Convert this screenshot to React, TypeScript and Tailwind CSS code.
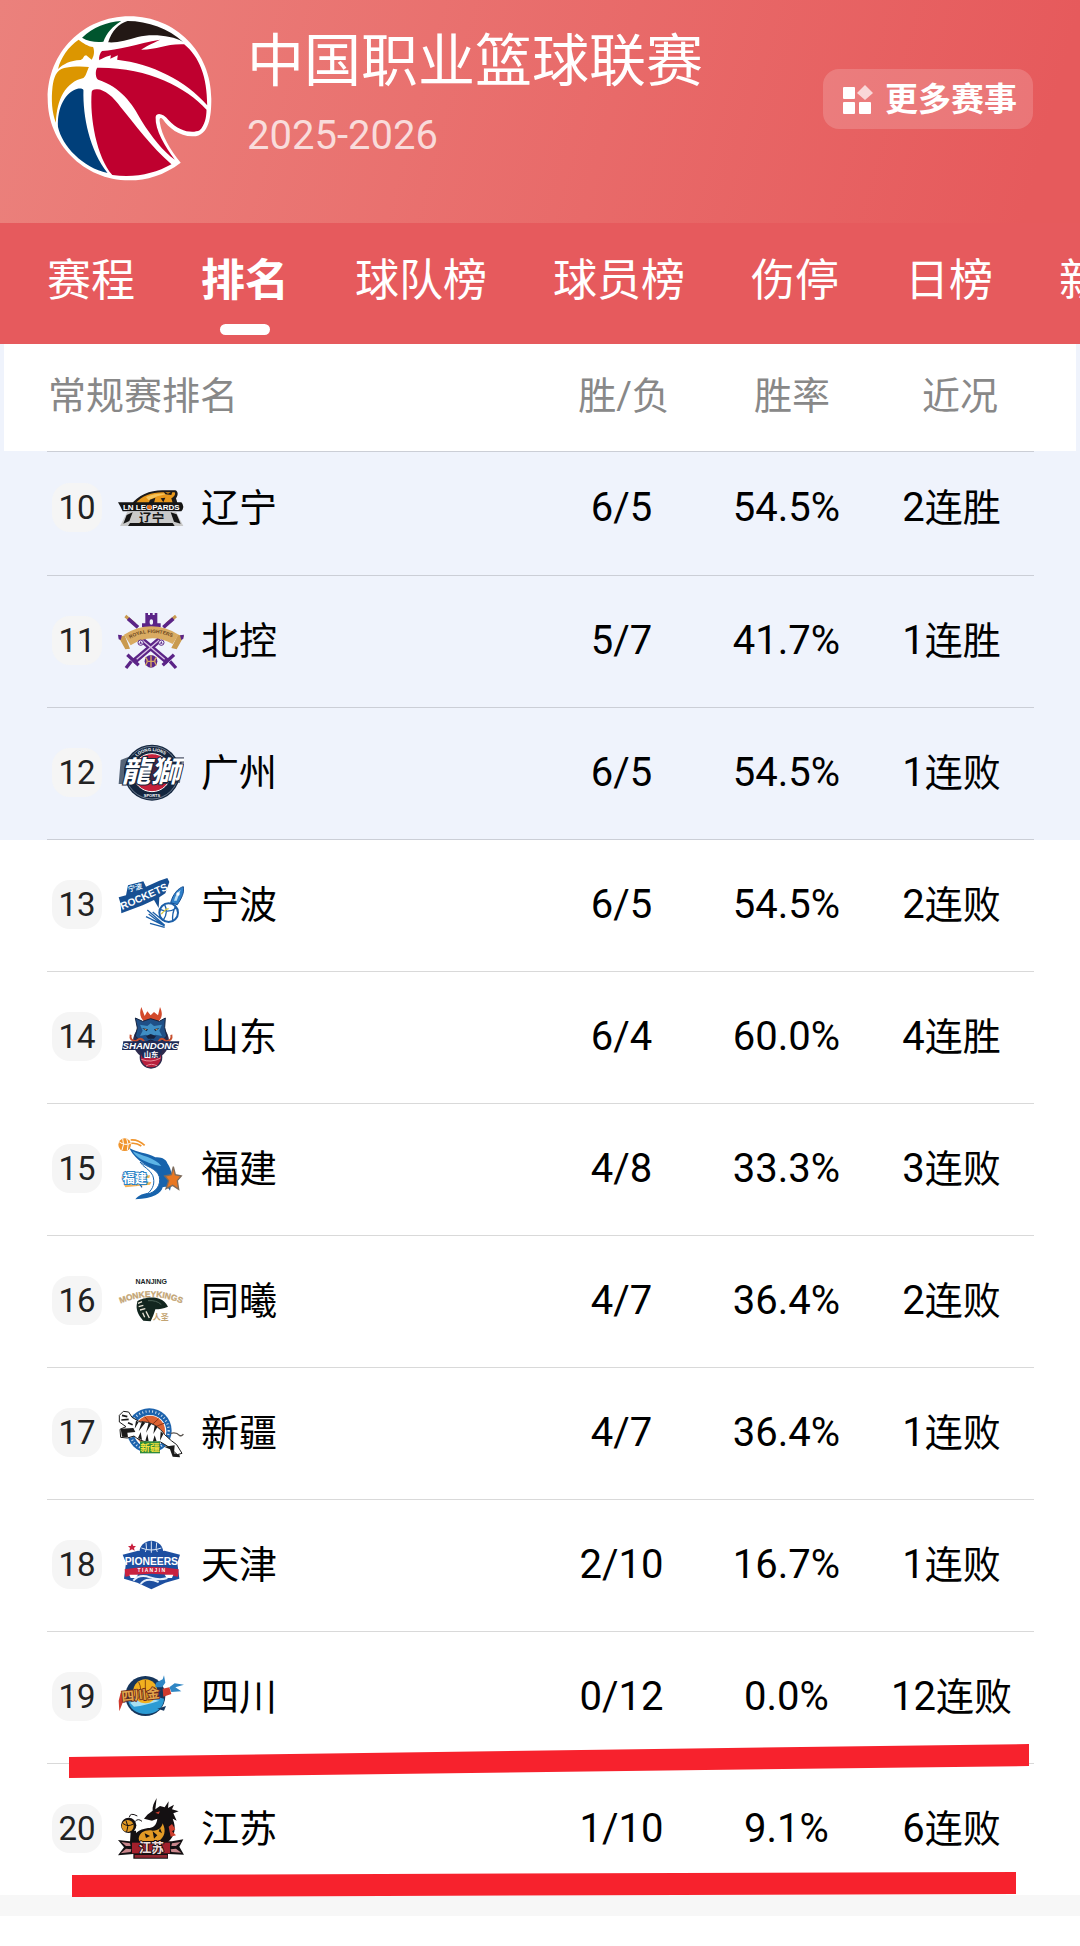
import type { ReactNode } from 'react'

type Team = {
  rank: number
  name: string
  record: string
  rate: string
  streak: number
  result: '连胜' | '连败'
  logo: ReactNode
}

const TABS = ['赛程', '排名', '球队榜', '球员榜', '伤停', '日榜', '新闻']

function LeagueLogo() {
  return (
    <svg viewBox="0 0 480 495" preserveAspectRatio="none" className="w-[165px] h-[165px] shrink-0" aria-hidden="true">
      <path fill="#fff" d="M389 440C340 478 290 493 240 493C105 493 2 380 2 248C2 110 105 1 240 1C375 1 478 110 478 248C478 300 472 360 425 361C385 362 354 336 337 310C330 302 326 306 328 318C334 360 358 400 389 440Z" />
      <path fill="#00552e" d="M102 65C134 33 174 18 216 15C189 33 174 50 164 77C144 80 119 76 102 65Z" />
      <path fill="#231815" d="M178 79C189 43 209 23 234 15C294 15 354 38 396 78C364 58 304 53 264 63C234 73 204 81 178 79Z" />
      <path fill="#dc9600" d="M92 71C104 81 119 91 134 93C139 105 137 121 130 131L114 118C106 118 108 128 98 132C66 134 48 144 32 159C40 125 62 92 92 71Z" />
      <path fill="#dc9600" d="M122 153C116 165 114 180 106 186C54 198 28 250 26 320C14 290 12 250 16 213C20 185 26 162 50 156C80 150 104 151 122 153Z" />
      <path fill="#003f7a" d="M106 223C104 303 124 403 176 471C104 455 44 390 32 333C29 273 54 228 89 218C100 217 106 219 106 223Z" />
      <path fill="#bf002f" d="M130 228C124 303 144 423 190 477C254 487 314 473 362 445C304 393 254 323 214 273C194 243 164 218 144 220Q130 221 130 228Z" />
      <path fill="#bf002f" d="M146 155C139 165 142 188 149 191C214 213 249 263 274 313C304 363 339 408 372 431C344 393 314 343 316 303C319 288 339 293 354 313C384 348 424 353 444 343C459 328 464 303 464 281C404 213 294 153 146 155Z" />
      <path fill="#bf002f" d="M160 105C204 103 264 83 329 71C304 83 284 93 274 101C324 101 344 83 399 85C444 123 466 183 466 268C404 193 304 143 204 131L206 118L184 128L186 118C174 121 159 128 152 133C150 123 154 111 160 105Z" />
    </svg>
  )
}

function TeamLogo({ children }: { children: ReactNode }) {
  return (
    <svg viewBox="0 0 198 198" className="w-[66px] h-[66px] shrink-0 font-['Liberation_Sans','Noto_Sans_CJK_SC',sans-serif] font-bold" aria-hidden="true">
      {children}
    </svg>
  )
}

const liaoning = (
  <>
    <path fill="#1c1a1a" d="M40 88C60 60 100 44 140 46L172 46C182 50 180 62 174 70L180 90L30 92Z" />
    <path fill="#e8981c" d="M52 86C72 60 108 50 140 52L170 52C174 58 168 66 160 70L164 84H60Z" />
    <path fill="#f6c45b" d="M84 66C104 56 130 54 150 56L118 64L92 76Z" />
    <path fill="#1c1a1a" d="M136 48L150 56L164 48L160 60L142 58ZM96 74L112 68L108 84H92ZM128 70L142 68L136 82Z" />
    <path fill="#151515" d="M0 82L190 82Q202 95 190 109L14 109L8 96Z" />
    <text x="100" y="104" fontSize="24" fill="#fff" textAnchor="middle">LN LEOPARDS</text>
    <circle cx="94" cy="96" r="7" fill="#e06a1c" />
    <path fill="#c9c9c9" d="M28 110L174 110L196 153L6 153Z" />
    <path fill="#151515" d="M26 120L44 112L34 138L16 146ZM158 112L176 118L188 146L168 140ZM36 144H164L170 153H30Z" />
    <text x="101" y="144" fontSize="38" fill="#151515" textAnchor="middle">辽宁</text>
  </>
)

const beikong = (
  <>
    <g fill="none">
      <path stroke="#c99a4f" strokeWidth="9" d="M22 24L50 48M174 24L146 48" />
      <path stroke="#5b2487" strokeWidth="11" d="M30 32L60 58M166 32L136 58" />
      <path stroke="#5b2487" strokeWidth="17" d="M70 94L150 162M126 94L46 162" />
      <path stroke="#d9c4e6" strokeWidth="4" d="M72 96L140 154M124 96L56 154" />
      <path stroke="#5b2487" strokeWidth="10" d="M28 140L62 172M168 140L134 172M40 160L24 180M156 160L174 180" />
    </g>
    <path fill="#5b2487" d="M82 15H90V21H96V15H104V21H110V15H118V46H128V58H72V46H82Z" />
    <rect x="95" y="34" width="10" height="16" rx="5" fill="#eff3fc" />
    <path fill="#c99a4f" d="M2 88L20 82L36 122L22 124ZM198 84L180 80L160 120L176 124Z" />
    <path fill="#d9ab62" d="M18 80Q100 30 182 80L164 108Q100 72 38 112Z" />
    <path fill="#5b2487" d="M0 80L12 82L8 96L2 94ZM186 82L198 80L196 92L190 96Z" />
    <path id="ribbon" d="M36 92Q100 58 172 92" fill="none" />
    <text fontSize="15" fill="#6b4520"><textPath href="#ribbon">ROYAL FIGHTERS</textPath></text>
    <g fill="#eff3fc" stroke="#5b2487" strokeWidth="3">
      <circle cx="68" cy="104" r="8" />
      <circle cx="130" cy="104" r="8" />
    </g>
    <path fill="#5b2487" d="M64 107L68 99L72 107ZM126 107L130 99L134 107Z" />
    <circle cx="99" cy="160" r="19" fill="#5b2487" />
    <path fill="none" stroke="#d9ab62" strokeWidth="4" d="M82 148Q94 160 82 172M116 148Q104 160 116 172M99 142V178M90 160H108" />
  </>
)

const guangzhou = (
  <>
    <circle cx="102" cy="98" r="84" fill="#14263f" />
    <circle cx="102" cy="98" r="79" fill="none" stroke="#9aa7b8" strokeWidth="2" />
    <circle cx="102" cy="98" r="57" fill="#c4213a" stroke="#fff" strokeWidth="3" />
    <path id="lionTop" d="M56 50Q102 14 156 54" fill="none" />
    <text fontSize="13" fill="#fff"><textPath href="#lionTop">LOONG LIONS</textPath></text>
    <text x="102" y="170" fontSize="12" fill="#fff" textAnchor="middle">SPORTS</text>
    <path fill="#14263f" d="M8 60L44 46L60 58L192 56L186 128L150 132L2 132Z" opacity=".7" />
    <text x="98" y="126" fontSize="88" fill="#fff" stroke="#14263f" strokeWidth="6" paintOrder="stroke" textAnchor="middle" fontStyle="italic">龍獅</text>
  </>
)

const ningbo = (
  <>
    <path stroke="#1c5fa8" strokeWidth="4" d="M88 114L140 160M92 126L134 158M100 142L140 162M84 134L118 150M96 154L140 166M104 120L136 146" />
    <circle cx="152" cy="122" r="28" fill="#fff" stroke="#1c5fa8" strokeWidth="6" />
    <path fill="none" stroke="#1c5fa8" strokeWidth="4" d="M126 112Q152 124 176 108M136 144Q152 122 140 98M164 146Q162 124 172 104" />
    <path fill="none" stroke="#d8c83c" strokeWidth="4" d="M130 126Q142 112 152 110" />
    <path fill="#2f7fc8" stroke="#174f92" strokeWidth="3" d="M196 44C180 48 164 68 158 92L178 98C190 80 200 62 196 44Z" />
    <path fill="#bfe0f5" d="M188 54C178 60 172 72 168 86L176 86Z" />
    <circle cx="180" cy="66" r="5" fill="#fff" />
    <path fill="#174f92" d="M2 76L24 70L30 40L76 28L84 44L124 26L148 18L154 30L142 64L124 76L122 108L108 84L74 100L10 124L8 96Z" />
    <text transform="translate(32 60) rotate(-14)" fontSize="22" fill="#dff0fb">宁波</text>
    <text transform="translate(13 114) rotate(-24)" fontSize="31" fill="#fff">ROCKETS</text>
  </>
)

const shandong = (
  <>
    <circle cx="99" cy="112" r="54" fill="#2d2a4d" />
    <path fill="#d34a2c" d="M70 9C62 30 68 46 84 56L116 56C132 46 136 30 126 9L120 34L108 24L98 34L88 22L80 36Z" />
    <path fill="#1f4f86" stroke="#16233f" strokeWidth="3" d="M52 42L74 52L98 44L124 52L142 42L140 70L146 96L124 118L98 108L74 118L52 96L58 72Z" />
    <path fill="#3f8ec4" d="M66 62L88 66L98 58L108 66L132 62L124 80L132 96L112 92L98 102L84 92L66 96L74 80Z" />
    <path fill="#16233f" d="M72 72L90 76L86 82ZM124 72L108 76L112 82ZM84 96L98 90L114 96L108 104L90 104Z" />
    <path fill="#f3a43a" d="M78 74L86 76L84 79ZM120 74L112 76L114 79Z" />
    <path fill="none" stroke="#c8502f" strokeWidth="6" d="M38 92Q34 110 54 112Q68 96 78 112M160 92Q164 110 144 112Q130 96 122 112" />
    <circle cx="99" cy="160" r="32" fill="#b71f3d" stroke="#2d2a4d" strokeWidth="4" />
    <path fill="none" stroke="#e8909c" strokeWidth="3" d="M70 166Q99 178 128 162M84 186Q100 176 118 186" />
    <path fill="#1e2a55" d="M16 112L184 112L178 138L12 138Z" />
    <text x="98" y="135" fontSize="29" fill="#fff" textAnchor="middle" fontStyle="italic">SHANDONG</text>
    <path fill="#1e2a55" d="M66 138H132L124 162H74Z" />
    <text x="99" y="159" fontSize="22" fill="#fff" textAnchor="middle">山东</text>
  </>
)

const fujian = (
  <>
    <circle cx="20" cy="26" r="19" fill="#f0942c" />
    <path fill="none" stroke="#fff" strokeWidth="3" d="M4 18Q20 30 38 22M12 42Q20 26 14 8M28 42Q34 26 26 8" />
    <path fill="none" stroke="#f0942c" strokeWidth="5" d="M38 12Q60 10 80 28M40 22Q56 20 70 30" />
    <path fill="#f4b25a" d="M10 122L96 118L94 126L14 132ZM18 146L100 138L96 146L22 154Z" />
    <path fill="#1763ac" d="M34 36C56 50 88 50 112 64C132 62 146 72 148 82C162 102 166 126 156 164C150 154 144 150 134 154C130 172 106 188 52 190C62 176 78 172 92 170C116 160 128 136 116 112C98 88 56 82 34 36Z" />
    <path fill="#5db4e6" d="M44 46C70 60 110 64 130 90C118 88 104 84 92 80C70 72 54 62 44 46Z" />
    <path fill="#fff" stroke="#1763ac" strokeWidth="3" d="M66 78C84 92 116 96 124 122C130 148 112 170 88 174C106 158 112 140 104 118C96 100 76 94 66 78Z" />
    <path fill="none" stroke="#1763ac" strokeWidth="4" d="M70 112Q54 134 72 154" />
    <path fill="#e87722" stroke="#7d6b5c" strokeWidth="4" d="M166 92L172 116L190 120L178 134L182 160L164 148L144 158L152 134L140 120L160 116Z" />
    <text x="50" y="142" fontSize="36" fill="#fff" stroke="#2b83c6" strokeWidth="6" paintOrder="stroke" textAnchor="middle">福建</text>
  </>
)

const tongxi = (
  <>
    <text x="100" y="49" fontSize="21" fill="#16241f" textAnchor="middle">NANJING</text>
    <path id="kings" d="M4 108Q100 66 194 108" fill="none" />
    <text fontSize="25" fill="#c3a473" stroke="#c3a473" strokeWidth="1"><textPath href="#kings" startOffset="50%" textAnchor="middle">MONKEYKINGS</textPath></text>
    <path fill="#12261f" d="M58 100C70 90 104 84 124 92C136 96 144 104 150 116C136 122 124 124 112 124C108 138 104 148 98 160L76 158C64 146 54 128 56 112Z" />
    <path fill="none" stroke="#e9e4d6" strokeWidth="4" d="M60 106L72 101M62 116L76 112M66 126L82 122M74 134L80 148M84 130L94 150" />
    <path fill="none" stroke="#4a6156" strokeWidth="3" d="M90 98Q116 96 130 110" />
    <text x="128" y="156" fontSize="24" fill="#c3a473" textAnchor="middle">人圣</text>
  </>
)

const xinjiang = (
  <>
    <circle cx="94" cy="92" r="67" fill="#1d63ad" />
    <circle cx="96" cy="94" r="49" fill="#fff" />
    <circle cx="96" cy="92" r="45" fill="#dc6232" />
    <path fill="none" stroke="#8c3516" strokeWidth="3" d="M56 78Q96 90 138 70M80 50Q112 80 110 136M122 56Q100 80 60 104" />
    <circle cx="94" cy="92" r="58" fill="none" stroke="#fff" strokeWidth="7" strokeDasharray="3 7" strokeOpacity=".8" />
    <path fill="#fff" stroke="#1b1b1b" strokeWidth="3" d="M4 46L16 34L32 36L42 52L66 66C96 62 126 82 140 104L160 122L176 134L192 160L178 164L154 142L128 126C104 130 70 128 48 108L28 114L8 112L6 88L24 80L4 66Z" />
    <path fill="#1b1b1b" d="M54 62L62 66L50 86ZM72 64L82 68L62 94ZM92 68L100 72L84 98ZM110 76L118 82L106 102ZM60 114L68 96L72 120ZM82 122L88 102L92 124ZM104 126L110 106L116 124ZM128 94L136 102L126 122Z" />
    <path fill="none" stroke="#1b1b1b" strokeWidth="5" d="M12 46L28 50M10 60L32 58M30 68L44 74" />
    <path fill="#1b1b1b" d="M8 86L46 84L52 96L28 98L30 112L12 110ZM138 140L170 136L168 160L184 164L186 172L164 170L156 148Z" />
    <path fill="none" stroke="#5a5550" strokeWidth="4" d="M158 100Q176 96 184 106Q192 110 196 102" />
    <rect x="66" y="124" width="60" height="36" fill="#2f8a3c" />
    <text x="96" y="152" fontSize="29" fill="#f3e13c" textAnchor="middle">新疆</text>
  </>
)

const tianjin = (
  <>
    <circle cx="100" cy="62" r="36" fill="#1d4fa0" />
    <path fill="none" stroke="#dfe9f6" strokeWidth="3" d="M70 48Q100 60 130 48M100 28V70M84 32Q90 50 78 70M116 32Q110 50 122 70" />
    <path fill="#1d4fa0" d="M14 68L60 56L100 62L140 56L186 68L178 92L184 140L142 152L100 172L58 152L18 140L24 92Z" />
    <path fill="#c9213f" d="M20 112Q100 96 182 112L180 134Q100 116 22 134Z" />
    <text x="100" y="99" fontSize="31" fill="#fff" textAnchor="middle">PIONEERS</text>
    <text x="100" y="120" fontSize="15" fill="#fff" textAnchor="middle">T I A N J I N</text>
    <path fill="#c9213f" d="M42 34L46 42L54 42L48 48L50 56L42 52L34 56L36 48L30 42L38 42Z" />
    <path fill="#fff" d="M34 128L60 128L54 138H38ZM166 128L140 128L146 138H162Z" />
    <path fill="none" stroke="#e6f0fa" strokeWidth="6" d="M46 146Q64 124 96 136Q124 146 148 138M68 156Q84 134 122 150" />
  </>
)

const sichuan = (
  <>
    <circle cx="82" cy="96" r="60" fill="#16365c" />
    <path fill="#2b9bd4" d="M30 108Q82 84 138 104C138 132 112 150 84 150C54 150 34 134 30 108Z" />
    <path fill="#a9e0f2" d="M36 116Q82 98 124 110Q84 124 48 128Z" />
    <circle cx="82" cy="82" r="36" fill="#f2b01f" />
    <path fill="none" stroke="#8a4a10" strokeWidth="3" d="M48 76Q82 90 116 72M82 48V104M62 54Q74 76 62 104" />
    <path fill="#2f86c4" d="M114 56L134 46L138 34L142 56L132 70L112 70ZM154 70L170 58L198 62L172 70L190 82L160 84Z" />
    <path fill="#cf3a2e" d="M8 86L28 82L14 116L4 142L2 110ZM134 74L154 70L160 90L136 98Z" />
    <path fill="#16365c" d="M118 134L144 126L138 140Z" />
    <text transform="translate(12 112) rotate(-6)" fontSize="38" fill="#e2a54c" stroke="#6b2a1a" strokeWidth="5" paintOrder="stroke">四川金</text>
  </>
)

const jiangsu = (
  <>
    <path fill="#141012" d="M116 6C108 20 102 32 104 44L88 56L78 68L102 74L118 68C116 88 104 96 90 96C62 100 44 112 46 138L150 138C170 120 176 96 164 68L176 74L166 52L182 46L162 40L168 26L150 36L152 16L140 34L126 30L112 40Z" />
    <path fill="#e39a25" d="M62 128C64 108 84 100 104 104C124 104 132 92 134 82C146 106 138 124 124 134L64 136Z" />
    <path fill="#141012" d="M80 112L96 120L84 126ZM104 106L118 118L108 128ZM126 96L132 112L122 106Z" />
    <path fill="#cf3f2f" d="M152 92L162 84L172 100L162 106L174 118L158 122ZM112 50L126 46L122 54Z" />
    <circle cx="32" cy="88" r="23" fill="#141012" />
    <circle cx="29" cy="90" r="18" fill="#e39a25" />
    <path fill="none" stroke="#141012" strokeWidth="3" d="M14 82Q30 94 46 84M24 74Q34 90 26 108M58 60Q36 48 34 64M72 76Q60 66 52 76" />
    <path fill="#141012" d="M38 104L54 104L56 138H36Z" />
    <path fill="#141012" d="M0 132L34 136H162L196 130L184 152L198 176L150 174V188H46V174L0 178L18 154Z" />
    <path fill="#c9868c" d="M10 138L36 142L38 150L24 150ZM8 172L24 158L40 160L38 168ZM188 138L162 142L160 150L174 150ZM190 170L174 158L158 160L160 168Z" />
    <rect x="42" y="140" width="114" height="32" fill="#a3202c" />
    <text x="100" y="169" fontSize="38" fill="#f0dcdc" stroke="#141012" strokeWidth="5" paintOrder="stroke" textAnchor="middle">江苏</text>
    <path fill="#8f2630" d="M50 177H148V185H50Z" />
  </>
)

const playIn: Team[] = [
  { rank: 10, name: '辽宁', record: '6/5', rate: '54.5%', streak: 2, result: '连胜', logo: liaoning },
  { rank: 11, name: '北控', record: '5/7', rate: '41.7%', streak: 1, result: '连胜', logo: beikong },
  { rank: 12, name: '广州', record: '6/5', rate: '54.5%', streak: 1, result: '连败', logo: guangzhou },
]

const others: Team[] = [
  { rank: 13, name: '宁波', record: '6/5', rate: '54.5%', streak: 2, result: '连败', logo: ningbo },
  { rank: 14, name: '山东', record: '6/4', rate: '60.0%', streak: 4, result: '连胜', logo: shandong },
  { rank: 15, name: '福建', record: '4/8', rate: '33.3%', streak: 3, result: '连败', logo: fujian },
  { rank: 16, name: '同曦', record: '4/7', rate: '36.4%', streak: 2, result: '连败', logo: tongxi },
  { rank: 17, name: '新疆', record: '4/7', rate: '36.4%', streak: 1, result: '连败', logo: xinjiang },
  { rank: 18, name: '天津', record: '2/10', rate: '16.7%', streak: 1, result: '连败', logo: tianjin },
  { rank: 19, name: '四川', record: '0/12', rate: '0.0%', streak: 12, result: '连败', logo: sichuan },
  { rank: 20, name: '江苏', record: '1/10', rate: '9.1%', streak: 6, result: '连败', logo: jiangsu },
]

function TeamRow({ team, size }: { team: Team; size: string }) {
  return (
    <tr className={`grid grid-cols-[1fr_165px_165px_165px] items-center border-black/15 text-center text-[40px] leading-none text-black ${size}`}>
      <th scope="row" className="flex items-center pl-[5px] font-normal">
        <span className="flex items-center justify-center w-[50px] h-[49px] mr-4 rounded-[18px] bg-[#f5f5f5] text-[33px] text-[#222]">{team.rank}</span>
        <TeamLogo>{team.logo}</TeamLogo>
        <span className="ml-[17px] text-[38px]">{team.name}</span>
      </th>
      <td>{team.record}</td>
      <td>{team.rate}</td>
      <td>{team.streak}<span className="text-[38px]">{team.result}</span></td>
    </tr>
  )
}

export default function App() {
  return (
    <div className="min-h-screen overflow-hidden bg-white font-['Roboto','Noto_Sans_CJK_SC',sans-serif]">
      <header className="flex items-start h-[223px] px-[47px] pt-4 bg-linear-[105deg,#eb817c,#e65a5c_95%] text-white">
        <LeagueLogo />
        <div className="ml-[35px] mt-4 flex-1">
          <h1 className="text-[57px] leading-[60px]">中国职业篮球联赛</h1>
          <p className="mt-[19px] text-[40px] leading-[50px] text-white/75">2025-2026</p>
        </div>
        <button className="flex items-center h-[60px] mt-[53px] pt-px pl-5 pr-4 gap-3 rounded-2xl bg-white/17 text-[33px] font-bold">
          <svg viewBox="0 0 30 30" className="w-[30px] h-[30px]" fill="#fff" aria-hidden="true">
            <rect x="0" y="2" width="12" height="12" rx="1" />
            <rect x="0" y="17" width="12" height="12" rx="1" />
            <rect x="16" y="17" width="12" height="12" rx="1" />
            <path d="M22 0L30 8L22 15L14 8Z" opacity=".7" />
          </svg>
          更多赛事
        </button>
      </header>

      <nav className="flex h-[121px] pl-[47px] gap-[66px] overflow-hidden bg-[#e65a5d] text-white">
        {TABS.map(tab => (
          <a
            key={tab}
            href="#"
            className={tab === '排名'
              ? 'flex flex-col items-center shrink-0 pt-7 text-[44px] leading-[60px] font-bold'
              : 'flex flex-col items-center shrink-0 pt-7 text-[44px] leading-[60px]'}
          >
            {tab}
            {tab === '排名' && <span className="w-[50px] h-[11px] mt-[13px] rounded-full bg-white" />}
          </a>
        ))}
      </nav>

      <main className="relative">
        <table className="block">
          <thead className="block px-1 bg-[#eff3fc]">
            <tr className="grid grid-cols-[1fr_168px_168px_168px] items-center h-[107px] pl-11 pr-8 pb-[3px] bg-white text-[38px] text-[#888]">
              <th scope="col" className="text-left font-normal">常规赛排名</th>
              <th scope="col" className="font-normal">胜/负</th>
              <th scope="col" className="font-normal">胜率</th>
              <th scope="col" className="font-normal">近况</th>
            </tr>
          </thead>
          <tbody className="block pl-[47px] pr-[46px] bg-[#eff3fc]">
            {playIn.map((team, i) => (
              <TeamRow key={i} team={team} size={i === 0 ? 'h-[125px] pb-3 border-y' : 'h-[132px] pb-0.5 border-b'} />
            ))}
          </tbody>
          <tbody className="block pl-[47px] pr-[46px]">
            {others.map((team, i) => (
              <TeamRow key={i} team={team} size={i === others.length - 1 ? 'h-[131px] pb-0.5' : 'h-[132px] pb-0.5 border-b'} />
            ))}
          </tbody>
        </table>
        {/* marker strokes over the bottom two teams */}
        <svg viewBox="0 0 1080 160" preserveAspectRatio="none" className="absolute bottom-0 left-0 w-full h-40 overflow-visible pointer-events-none" fill="#f7222d" aria-hidden="true">
          <path d="M69 22L1029 9V31L69 43Z" />
          <path d="M72 140L1016 137V159L72 162Z" />
        </svg>
      </main>
      <footer className="h-[21px] bg-[#f7f7f7]" />
    </div>
  )
}
